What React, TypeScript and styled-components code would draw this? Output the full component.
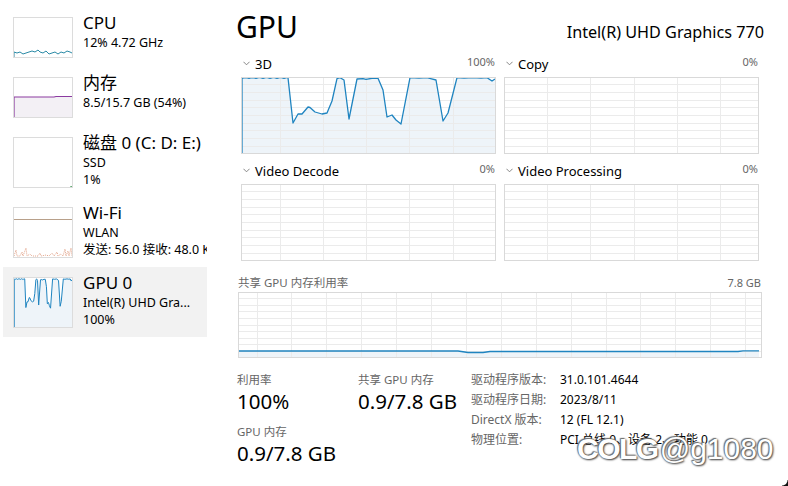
import React from 'react';
import styled, { createGlobalStyle } from 'styled-components';

type Pt = [number, number];

const GlobalStyle = createGlobalStyle`
  html, body {
    margin: 0;
    padding: 0;
    background: #fff;
  }
  body {
    font-family: "Noto Sans", "Noto Sans CJK SC", sans-serif;
    color: #000;
  }
`;

const BLUE = '#1f84c0';
const BLUE_FILL = '#eef4f9';

// 3D engine usage, in graph pixels (254 x 76)
const wave: Pt[] = [];
for (let x = 1; x <= 47; x += 3.5) wave.push([x, wave.length % 2 ? 0.4 : 1.4]);
const gpu3d: Pt[] = [
  ...wave,
  [47, 0.7], [52, 46], [57, 37], [61, 37], [67, 30], [69, 30.5], [74, 35], [81, 37],
  [86, 36], [91, 24], [96, 1.7], [99, 0.7], [103, 3], [108, 42], [116, 2], [122, 1.7],
  [125, 2.3], [131, 1.3], [137, 1.3], [142, 13], [146, 40], [151, 38], [155, 43],
  [160, 47], [169, 0.7], [178, 1.2], [186, 0.7], [195, 3], [202, 44], [207, 36],
  [216, 0.7], [223, 1.2], [232, 0.6], [240, 1.1], [246, 0.7], [251, 4], [254, 2],
];

const gpuThumb: Pt[] = gpu3d.map(([x, y]) => [(x * 58) / 254, (y * 48) / 76 + 0.5]);

const cpuThumb: Pt[] = [
  [0, 34], [3, 35], [6, 34], [9, 36], [12, 35], [15, 34], [18, 33], [21, 34], [24, 32],
  [26, 34], [29, 35], [32, 33], [35, 36], [38, 35], [41, 34], [44, 36], [47, 34],
  [50, 35], [53, 33], [56, 34], [58, 35],
];

const sharedLine: Pt[] = [
  [0, 59], [220, 59], [230, 60.5], [245, 60.5], [252, 59.5], [500, 59.5], [505, 58.8], [521, 58.8],
];

interface ChartProps {
  w: number;
  h: number;
  rows?: number;
  colStart?: number;
  colStep?: number;
  points?: Pt[];
  color?: string;
  fill?: string;
}

const Chart: React.FC<ChartProps> = ({ w, h, rows = 10, colStart = 0, colStep, points, color = BLUE, fill = BLUE_FILL }) => {
  const grid: React.ReactNode[] = [];
  for (let i = 1; i < rows; i++) {
    const y = (h * i) / rows;
    grid.push(<line key={'r' + i} x1={0} x2={w} y1={y} y2={y} />);
  }
  if (colStep) {
    for (let x = colStart; x < w; x += colStep) {
      grid.push(<line key={'c' + x} x1={x} x2={x} y1={0} y2={h} />);
    }
  }
  let area = '';
  let line = '';
  if (points && points.length) {
    const first = points[0];
    const last = points[points.length - 1];
    const body = points.map((p) => `L${p[0]},${p[1]}`).join(' ');
    area = `M${first[0]},${h} ${body} L${last[0]},${h} Z`;
    line = `M${first[0]},${h} ${body}`;
  }
  return (
    <Frame $w={w} $h={h}>
      <svg width={w} height={h} viewBox={`0 0 ${w} ${h}`}>
        {area && <path d={area} fill={fill} />}
        <g stroke="#ebebeb" strokeWidth={1} shapeRendering="crispEdges">{grid}</g>
        {line && <path d={line} fill="none" stroke={color} strokeWidth={1.3} strokeLinejoin="round" />}
      </svg>
    </Frame>
  );
};

const Thumb: React.FC<{ h: number; children?: React.ReactNode }> = ({ h, children }) => (
  <ThumbBox $h={h}>
    <svg width={58} height={h - 2} viewBox={`0 0 58 ${h - 2}`}>{children}</svg>
  </ThumbBox>
);

const areaOf = (pts: Pt[], h: number) =>
  `M${pts[0][0]},${h} ${pts.map((p) => `L${p[0]},${p[1]}`).join(' ')} L${pts[pts.length - 1][0]},${h} Z`;
const lineOf = (pts: Pt[], h: number) => `M${pts[0][0]},${h} ${pts.map((p) => `L${p[0]},${p[1]}`).join(' ')}`;

const wifiPeaks = 'M0,48 L2,42 L3,48 L6,48 L8,44 L9,48 L12,40 L13,48 L16,46 L18,48 L24,48 L26,45 L27,48 L32,47 L35,48 L38,45 L40,48 L43,44 L44,48 L47,46 L49,48 L51,41 L52,48 L54,43 L55,48 L57,40 L58,48';

const SideItem: React.FC<{
  active?: boolean;
  thumbH: number;
  title: string;
  lines: string[];
  graph: React.ReactNode;
}> = ({ active, thumbH, title, lines, graph }) => (
  <Item $active={active}>
    <Thumb h={thumbH}>{graph}</Thumb>
    <ItemText>
      <ItemTitle>{title}</ItemTitle>
      {lines.map((l) => (
        <ItemSub key={l}>{l}</ItemSub>
      ))}
    </ItemText>
  </Item>
);

const Panel: React.FC<{ name: string; value: string; points?: Pt[]; colStart: number }> = ({ name, value, points, colStart }) => (
  <div>
    <PanelHead>
      <PanelName>
        <Chevron viewBox="0 0 8 5">
          <path d="M0.5,0.5 L4,4 L7.5,0.5" />
        </Chevron>
        {name}
      </PanelName>
      <PanelValue>{value}</PanelValue>
    </PanelHead>
    <Chart w={255} h={77} colStart={colStart} colStep={43.3} points={points} />
  </div>
);

export default function App() {
  return (
    <>
      <GlobalStyle />
      <Page>
        <Sidebar>
          <SideItem
            thumbH={41}
            title="CPU"
            lines={['12% 4.72 GHz']}
            graph={<path d={lineOf(cpuThumb, 39)} fill="none" stroke="#2a8aa6" strokeWidth={1} />}
          />
          <SideItem
            thumbH={41}
            title="内存"
            lines={['8.5/15.7 GB (54%)']}
            graph={
              <>
                <path d={areaOf([[0, 19], [40, 19], [42, 18.5], [58, 18.5]], 39)} fill="#f3f0f5" />
                <path d={lineOf([[0, 19], [40, 19], [42, 18.5], [58, 18.5]], 39)} fill="none" stroke="#8b3aa0" strokeWidth={1.2} />
              </>
            }
          />
          <SideItem
            thumbH={51}
            title="磁盘 0 (C: D: E:)"
            lines={['SSD', '1%']}
            graph={<path d="M56,49 L58,48.5" stroke="#4da060" strokeWidth={1} fill="none" />}
          />
          <SideItem
            thumbH={51}
            title="Wi-Fi"
            lines={['WLAN', '发送: 56.0 接收: 48.0 K']}
            graph={
              <>
                <line x1={0} x2={58} y1={11.5} y2={11.5} stroke="#b8a08a" strokeWidth={1.2} />
                <path d={wifiPeaks} fill="none" stroke="#e3a48a" strokeWidth={1} strokeDasharray="1 1" />
              </>
            }
          />
          <SideItem
            active
            thumbH={51}
            title="GPU 0"
            lines={['Intel(R) UHD Gra...', '100%']}
            graph={
              <>
                <path d={areaOf(gpuThumb, 49)} fill={BLUE_FILL} />
                <path d={lineOf(gpuThumb, 49)} fill="none" stroke={BLUE} strokeWidth={1} />
              </>
            }
          />
        </Sidebar>

        <Main>
          <Header>
            <Title>GPU</Title>
            <Adapter>Intel(R) UHD Graphics 770</Adapter>
          </Header>

          <PanelGrid>
            <Panel name="3D" value="100%" points={gpu3d} colStart={39} />
            <Panel name="Copy" value="0%" colStart={43.5} />
            <Panel name="Video Decode" value="0%" colStart={39} />
            <Panel name="Video Processing" value="0%" colStart={43.5} />
          </PanelGrid>

          <Shared>
            <PanelHead $gap={1}>
              <SmallLabel>共享 GPU 内存利用率</SmallLabel>
              <PanelValue>7.8 GB</PanelValue>
            </PanelHead>
            <Chart w={524} h={66} colStart={19} colStep={34.9} points={sharedLine} />
          </Shared>

          <Stats>
            <StatGrid>
              <Stat>
                <SmallLabel>利用率</SmallLabel>
                <StatValue>100%</StatValue>
              </Stat>
              <Stat>
                <SmallLabel>共享 GPU 内存</SmallLabel>
                <StatValue>0.9/7.8 GB</StatValue>
              </Stat>
              <Stat>
                <SmallLabel>GPU 内存</SmallLabel>
                <StatValue>0.9/7.8 GB</StatValue>
              </Stat>
            </StatGrid>
            <InfoTable>
              <InfoKey>驱动程序版本:</InfoKey>
              <InfoVal>31.0.101.4644</InfoVal>
              <InfoKey>驱动程序日期:</InfoKey>
              <InfoVal>2023/8/11</InfoVal>
              <InfoKey>DirectX 版本:</InfoKey>
              <InfoVal>12 (FL 12.1)</InfoVal>
              <InfoKey>物理位置:</InfoKey>
              <InfoVal>PCI 总线 0、设备 2、功能 0</InfoVal>
            </InfoTable>
          </Stats>
        </Main>

        <Watermark>
          <b>COLG</b>@g1080
        </Watermark>
        <Corner />
      </Page>
    </>
  );
}

const Page = styled.div`
  position: relative;
  display: flex;
  width: 788px;
  height: 486px;
  overflow: hidden;
  background: #fff;
`;

const Sidebar = styled.div`
  width: 204px;
  margin-left: 3px;
  padding-top: 7px;
  display: flex;
  flex-direction: column;
`;

const Item = styled.div<{ $active?: boolean }>`
  display: flex;
  align-items: flex-start;
  gap: 10px;
  padding: 10px 10px 9px;
  background: ${({ $active }) => ($active ? '#f2f2f2' : 'transparent')};
  overflow: hidden;
  white-space: nowrap;
`;

const ThumbBox = styled.div<{ $h: number }>`
  flex: none;
  width: 60px;
  height: ${({ $h }) => $h}px;
  box-sizing: border-box;
  border: 1px solid #dcdcdc;
  background: #fff;
  svg {
    display: block;
  }
`;

const ItemText = styled.div`
  margin-top: -5px;
  display: flex;
  flex-direction: column;
`;

const ItemTitle = styled.div`
  font-size: 17px;
  line-height: 22px;
`;

const ItemSub = styled.div`
  font-size: 12.5px;
  line-height: 17px;
`;

const Main = styled.div`
  flex: 1;
  padding: 7px 24px 0 29px;
  display: flex;
  flex-direction: column;
`;

const Header = styled.div`
  display: flex;
  justify-content: space-between;
  align-items: baseline;
  height: 40px;
`;

const Title = styled.div`
  font-size: 30px;
  line-height: 40px;
`;

const Adapter = styled.div`
  font-size: 16.2px;
`;

const PanelGrid = styled.div`
  margin: 7px 0 0 5px;
  display: grid;
  grid-template-columns: 255px 255px;
  column-gap: 8px;
  row-gap: 7px;
`;

const PanelHead = styled.div<{ $gap?: number }>`
  display: flex;
  justify-content: space-between;
  align-items: baseline;
  height: 16px;
  margin-bottom: ${({ $gap = 7 }) => $gap}px;
  padding-right: 1px;
`;

const PanelName = styled.div`
  display: flex;
  align-items: center;
  gap: 5px;
  font-size: 13px;
  line-height: 16px;
  padding-left: 2px;
`;

const Chevron = styled.svg`
  width: 7px;
  height: 5px;
  fill: none;
  stroke: #777;
  stroke-width: 1;
`;

const PanelValue = styled.div`
  font-size: 11px;
  line-height: 16px;
  color: #666;
`;

const Frame = styled.div<{ $w: number; $h: number }>`
  width: ${({ $w }) => $w}px;
  height: ${({ $h }) => $h}px;
  box-sizing: border-box;
  border: 1px solid #d9d9d9;
  overflow: hidden;
  svg {
    display: block;
    margin: -1px;
  }
`;

const Shared = styled.div`
  margin: 14px 0 0 2px;
  width: 524px;
`;

const SmallLabel = styled.div`
  font-size: 11.5px;
  line-height: 16px;
  color: #666;
`;

const Stats = styled.div`
  margin: 14px 0 0 1px;
  display: flex;
`;

const StatGrid = styled.div`
  display: grid;
  grid-template-columns: 121px 113px;
  row-gap: 10px;
`;

const Stat = styled.div`
  display: flex;
  flex-direction: column;
`;

const StatValue = styled.div`
  font-size: 20.5px;
  line-height: 26px;
`;

const InfoTable = styled.div`
  margin-top: -3px;
  display: grid;
  grid-template-columns: 89px auto;
  grid-auto-rows: 20px;
  align-items: center;
  font-size: 12px;
`;

const InfoKey = styled.div`
  color: #666;
`;

const InfoVal = styled.div`
  color: #000;
`;

const Watermark = styled.div`
  position: absolute;
  left: 577px;
  top: 431px;
  font-family: "Liberation Sans", sans-serif;
  font-size: 30px;
  line-height: 36px;
  color: #fff;
  text-shadow: 0 0 2px #555, 1px 1px 2px #444, -1px -1px 1px #777;
  b {
    font-weight: 700;
    letter-spacing: -1.5px;
    margin-right: 2px;
  }
`;

const Corner = styled.div`
  position: absolute;
  right: 0;
  bottom: 0;
  width: 6px;
  height: 6px;
  background: radial-gradient(circle at 0 0, transparent 5px, #111 6px);
`;
